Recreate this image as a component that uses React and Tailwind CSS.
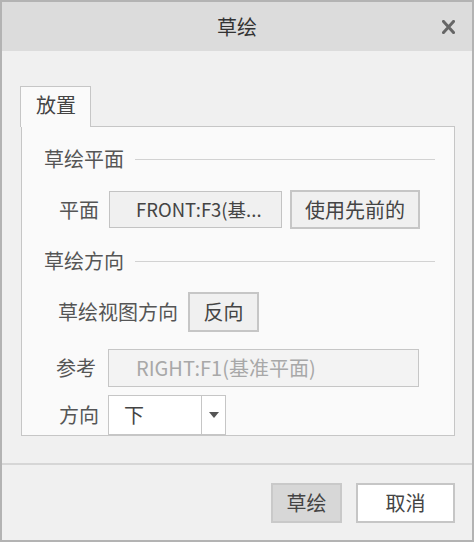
import React from 'react';

const font = { fontFamily: '"Noto Sans CJK SC", "Microsoft YaHei", sans-serif' };

function SectionTitle({ children }) {
    return (
        <div className="flex items-center h-[26px]">
            <span className="text-[20px] leading-none text-[#555]">{children}</span>
            <div className="flex-1 h-px bg-[#d2d2d2] ml-[11px]" />
        </div>
    );
}

export default function App() {
    return (
        <div
            className="w-[474px] h-[542px] border-2 border-[#b3b3b3] bg-[#f0f0f0] flex flex-col text-[#333]"
            style={font}
        >
            {/* title bar */}
            <div className="h-[49px] shrink-0 bg-[#dcdcdc] relative flex items-center justify-center">
                <span className="text-[20px] leading-none text-[#333]">草绘</span>
                <svg className="absolute right-[17px] top-[18px]" width="13" height="14" viewBox="0 0 13 14">
                    <path d="M1.5 1.5 L11.5 12.5 M11.5 1.5 L1.5 12.5" stroke="#666" strokeWidth="3" strokeLinecap="square" />
                </svg>
            </div>

            {/* body */}
            <div className="flex-1 pl-[18px] pr-[17px] pt-[35px]">
                <div className="flex">
                    <div className="w-[71px] h-[41px] -mb-px relative z-10 bg-[#fafafa] border border-b-0 border-[#c6c6c6] pl-[15px] pt-[8px] text-[20px] leading-none text-[#444]">
                        放置
                    </div>
                </div>
                <div className="ml-px h-[310px] border border-[#c6c6c6] bg-[#fafafa] pl-[22px] pr-[19px] pt-[19px] overflow-hidden">
                    <SectionTitle>草绘平面</SectionTitle>

                    <div className="flex items-center mt-[18px]">
                        <span className="w-[50px] ml-[15px] text-[20px] leading-none text-[#555]">平面</span>
                        <div className="w-[173px] h-[37px] border border-[#c3c3c3] bg-[#f0f0f0] flex items-center pl-[26px] text-[18.5px] text-[#444] whitespace-nowrap">
                            FRONT:F3(基...
                        </div>
                        <div className="ml-[8px] w-[130px] h-[39px] border-2 border-[#c6c6c6] bg-[#f0f0f0] flex items-center justify-center text-[20px] text-[#444]">
                            使用先前的
                        </div>
                    </div>

                    <div className="mt-[19px]">
                        <SectionTitle>草绘方向</SectionTitle>
                    </div>

                    <div className="flex items-center mt-[18px]">
                        <span className="ml-[14px] text-[20px] leading-none text-[#555]">草绘视图方向</span>
                        <div className="ml-[10px] w-[71px] h-[40px] border-2 border-[#c6c6c6] bg-[#f0f0f0] flex items-center justify-center text-[20px] text-[#444]">
                            反向
                        </div>
                    </div>

                    <div className="flex items-center mt-[17px]">
                        <span className="w-[52px] ml-[12px] text-[20px] leading-none text-[#555]">参考</span>
                        <div className="w-[311px] h-[38px] border border-[#c6c6c6] bg-[#f3f3f3] flex items-center pl-[27px] text-[20px] text-[#a8a8a8] whitespace-nowrap">
                            RIGHT:F1(基准平面)
                        </div>
                    </div>

                    <div className="flex items-center mt-[8px]">
                        <span className="w-[49px] ml-[15px] text-[20px] leading-none text-[#555]">方向</span>
                        <div className="w-[118px] h-[40px] border border-[#c6c6c6] bg-white flex">
                            <div className="flex-1 flex items-center pl-[15px] text-[20px] text-[#444]">下</div>
                            <div className="w-[24px] border-l border-[#c6c6c6] flex items-center justify-center">
                                <svg width="10" height="6" viewBox="0 0 10 6">
                                    <path d="M0 0 L10 0 L5 6 Z" fill="#555" />
                                </svg>
                            </div>
                        </div>
                    </div>
                </div>
            </div>

            {/* footer */}
            <div className="h-[77px] shrink-0 border-t-2 border-[#d6d6d6] flex justify-end items-start pt-[18px] pr-[17px] gap-[14px]">
                <div className="w-[71px] h-[40px] border-2 border-[#c9c9c9] bg-[#d7d7d7] flex items-center justify-center text-[20px] text-[#444]">
                    草绘
                </div>
                <div className="w-[99px] h-[40px] border-2 border-[#c6c6c6] bg-white flex items-center justify-center text-[20px] text-[#444]">
                    取消
                </div>
            </div>
        </div>
    );
}
